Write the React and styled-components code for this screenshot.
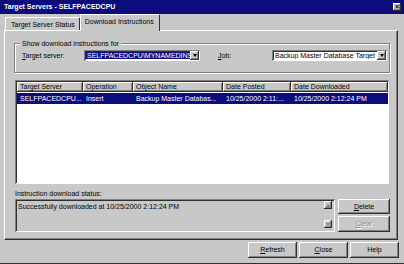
import React from "react"
import styled, { createGlobalStyle, css } from "styled-components"

const GRAY = "#c8c8c8"
const NAVY = "#0c0c7c"

const GlobalStyle = createGlobalStyle`
  html, body {
    margin: 0;
    padding: 0;
    background: ${GRAY};
  }
  body {
    font-family: "Liberation Sans", Arial, sans-serif;
    font-size: 7px;
    color: #000;
  }
  * { box-sizing: border-box; }
`

const raised = css`
  background: ${GRAY};
  box-shadow: inset -1px -1px 0 #303030, inset 1px 1px 0 #fff,
    inset -2px -2px 0 #808080;
`

const sunken = css`
  box-shadow: inset 1px 1px 0 #808080, inset -1px -1px 0 #fff,
    inset 2px 2px 0 #303030;
`

const Window = styled.div`
  width: 404px;
  height: 264px;
  background: ${GRAY};
  border-bottom: 1px solid #303030;
  display: flex;
  flex-direction: column;
  overflow: hidden;
`

const TitleBar = styled.div`
  height: 14px;
  flex: none;
  background: ${NAVY};
  color: #fff;
  font-weight: 700;
  font-size: 7px;
  display: flex;
  align-items: center;
  justify-content: space-between;
  padding: 0 3px 1px 4px;
`

const CloseBox = styled.div`
  width: 8px;
  height: 8px;
  ${raised};
  color: #000;
  font-size: 7px;
  line-height: 8px;
  text-align: center;
  font-weight: 700;
`

const TabRow = styled.div`
  height: 16px;
  flex: none;
  display: flex;
  align-items: flex-end;
  padding-left: 5px;
  position: relative;
  z-index: 1;
`

const Tab = styled.div`
  height: ${p => (p.$active ? "17px" : "13px")};
  margin-bottom: ${p => (p.$active ? "-1px" : "0")};
  padding: ${p => (p.$active ? "2px 5px 0 4px" : "2px 4px 0 5px")};
  background: ${GRAY};
  border-top: 1px solid #fff;
  border-left: 1px solid #fff;
  border-right: 1px solid #303030;
  border-top-left-radius: 1px;
  border-top-right-radius: 1px;
  line-height: 9px;
  white-space: nowrap;
`

const Panel = styled.div`
  width: 394px;
  height: 210px;
  flex: none;
  margin-left: 4px;
  border-top: 1px solid #fff;
  border-left: 1px solid #fff;
  border-right: 1px solid #303030;
  border-bottom: 1px solid #303030;
  box-shadow: inset -1px -1px 0 #808080;
  padding: 12px 7px 0 9px;
  display: flex;
  flex-direction: column;
`

const GroupBox = styled.div`
  height: 30px;
  border: 1px solid #808080;
  box-shadow: inset 1px 1px 0 #fff, 1px 1px 0 #fff;
  display: flex;
  flex-direction: column;
`

const GroupTitle = styled.div`
  margin: -5px 0 0 5px;
  padding: 0 2px;
  width: fit-content;
  line-height: 9px;
  background: ${GRAY};
`

const FieldRow = styled.div`
  display: flex;
  align-items: center;
  margin-top: 2px;
  padding-left: 7px;
`

const Label = styled.span`
  width: ${p => p.$w}px;
  flex: none;
  white-space: nowrap;
`

const Combo = styled.div`
  width: ${p => p.$w}px;
  height: 11px;
  flex: none;
  background: #fff;
  ${sunken};
  display: flex;
  align-items: stretch;
  padding: 2px 2px 2px 2px;
`

const ComboText = styled.div`
  flex: 1;
  min-width: 0;
  overflow: hidden;
  white-space: nowrap;
  line-height: 7px;
  padding-left: 1px;
  background: ${p => (p.$selected ? NAVY : "transparent")};
  color: ${p => (p.$selected ? "#fff" : "#000")};
`

const DropButton = styled.div`
  width: 9px;
  flex: none;
  margin: -1px -1px -1px 0;
  ${raised};
  display: flex;
  align-items: center;
  justify-content: center;
`

const Arrow = styled.div`
  width: 0;
  height: 0;
  border-left: 2.5px solid transparent;
  border-right: 2.5px solid transparent;
  border-${p => (p.$up ? "bottom" : "top")}: 3px solid
    ${p => (p.$disabled ? "#808080" : "#000")};
`

const ListView = styled.div`
  height: 104px;
  width: 374px;
  margin: 7px 0 0 1px;
  background: #fff;
  ${sunken};
  padding: 2px 1px 1px 2px;
  display: flex;
  flex-direction: column;
`

const ListHeader = styled.div`
  display: flex;
  height: 10px;
  flex: none;
`

const HeaderCell = styled.div`
  width: ${p => p.$w}px;
  flex: ${p => (p.$grow ? "1" : "none")};
  ${raised};
  padding: 1px 0 0 3px;
  line-height: 8px;
  white-space: nowrap;
  overflow: hidden;
`

const ListRow = styled.div`
  display: flex;
  height: 11px;
  margin-top: 1px;
  background: ${p => (p.$selected ? NAVY : "transparent")};
  color: ${p => (p.$selected ? "#fff" : "#000")};
`

const Cell = styled.div`
  width: ${p => p.$w}px;
  flex: ${p => (p.$grow ? "1" : "none")};
  padding: 2px 2px 0 3px;
  line-height: 8px;
  white-space: nowrap;
  overflow: hidden;
`

const StatusLabel = styled.div`
  margin: 5px 0 0 1px;
  line-height: 9px;
`

const StatusRow = styled.div`
  display: flex;
  margin-top: 1px;
  padding-left: 1px;
  gap: 3px;
`

const StatusBox = styled.div`
  width: 320px;
  height: 33px;
  ${sunken};
  display: flex;
  padding: 2px 2px 2px 3px;
`

const StatusText = styled.div`
  flex: 1;
  line-height: 9px;
  padding-top: 1px;
`

const ScrollCol = styled.div`
  width: 8px;
  display: flex;
  flex-direction: column;
  justify-content: space-between;
  padding: 0 0 2px;
  margin-right: 1px;
`

const ScrollButton = styled.div`
  width: 8px;
  height: 8px;
  ${raised};
  display: flex;
  align-items: center;
  justify-content: center;
`

const SideButtons = styled.div`
  display: flex;
  flex-direction: column;
  gap: 2px;
`

const Button = styled.div`
  width: ${p => p.$w}px;
  height: ${p => p.$h}px;
  ${raised};
  display: flex;
  align-items: center;
  justify-content: center;
  color: ${p => (p.$disabled ? "#8a8a8a" : "#000")};
  text-shadow: ${p => (p.$disabled ? "1px 1px 0 #fff" : "none")};
  padding-bottom: 1px;
`

const Footer = styled.div`
  display: flex;
  justify-content: flex-end;
  gap: 2px;
  padding: 2px 5px 0 0;
`

const columns = [
  { key: "server", title: "Target Server", w: 66 },
  { key: "op", title: "Operation", w: 50 },
  { key: "object", title: "Object Name", w: 90 },
  { key: "posted", title: "Date Posted", w: 68 },
  { key: "downloaded", title: "Date Downloaded", w: 96, grow: true },
]

const rows = [
  {
    server: "SELFPACEDCPU...",
    op: "Insert",
    object: "Backup Master Databas...",
    posted: "10/25/2000 2:11:...",
    downloaded: "10/25/2000 2:12:24 PM",
  },
]

const App = () => (
  <>
    <GlobalStyle />
    <Window>
      <TitleBar>
        <span>Target Servers - SELFPACEDCPU</span>
        <CloseBox>×</CloseBox>
      </TitleBar>

      <TabRow>
        <Tab>Target Server Status</Tab>
        <Tab $active>Download Instructions</Tab>
      </TabRow>

      <Panel>
        <GroupBox>
          <GroupTitle>Show download instructions for</GroupTitle>
          <FieldRow>
            <Label $w={62}>
              <u>T</u>arget server:
            </Label>
            <Combo $w={116}>
              <ComboText $selected>SELFPACEDCPU\MYNAMEDINSTANCE</ComboText>
              <DropButton>
                <Arrow />
              </DropButton>
            </Combo>
            <Label $w={54} style={{ marginLeft: 18 }}>
              <u>J</u>ob:
            </Label>
            <Combo $w={115}>
              <ComboText>Backup Master Database Target Servers</ComboText>
              <DropButton>
                <Arrow />
              </DropButton>
            </Combo>
          </FieldRow>
        </GroupBox>

        <ListView>
          <ListHeader>
            {columns.map(c => (
              <HeaderCell key={c.key} $w={c.w} $grow={c.grow}>
                {c.title}
              </HeaderCell>
            ))}
          </ListHeader>
          {rows.map((r, i) => (
            <ListRow key={i} $selected>
              {columns.map(c => (
                <Cell key={c.key} $w={c.w} $grow={c.grow}>
                  {r[c.key]}
                </Cell>
              ))}
            </ListRow>
          ))}
        </ListView>

        <StatusLabel>Instruction download status:</StatusLabel>
        <StatusRow>
          <StatusBox>
            <StatusText>Successfully downloaded at 10/25/2000 2:12:24 PM</StatusText>
            <ScrollCol>
              <ScrollButton>
                <Arrow $up $disabled />
              </ScrollButton>
              <ScrollButton>
                <Arrow $disabled />
              </ScrollButton>
            </ScrollCol>
          </StatusBox>
          <SideButtons>
            <Button $w={52} $h={15}>
              <span>
                <u>D</u>elete
              </span>
            </Button>
            <Button $w={52} $h={16} $disabled>
              <span>
                <u>C</u>lear
              </span>
            </Button>
          </SideButtons>
        </StatusRow>
      </Panel>

      <Footer>
        <Button $w={49} $h={16}>
          <span>
            <u>R</u>efresh
          </span>
        </Button>
        <Button $w={49} $h={16}>
          <span>
            <u>C</u>lose
          </span>
        </Button>
        <Button $w={49} $h={16}>
          Help
        </Button>
      </Footer>
    </Window>
  </>
)

export default App
